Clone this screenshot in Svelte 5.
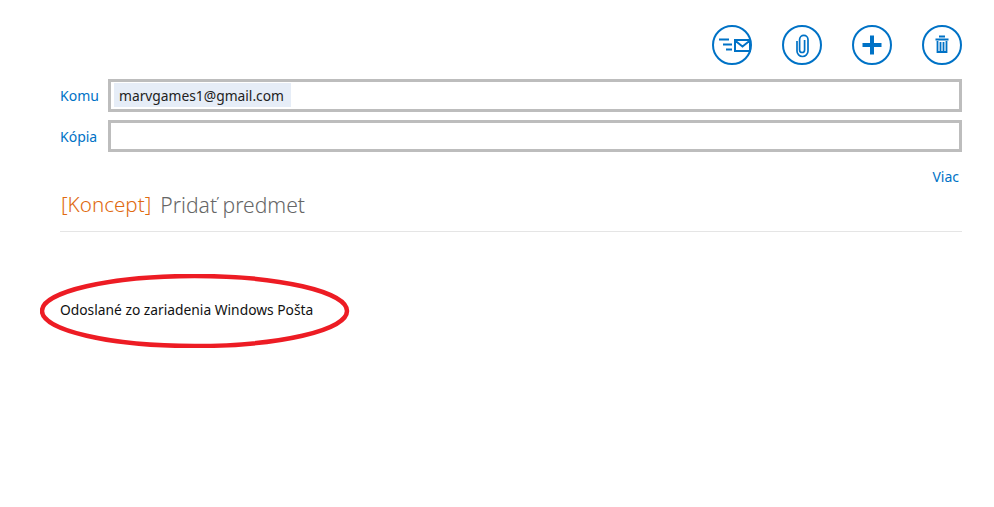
<script>
  let to = 'marvgames1@gmail.com'
</script>

<div class="compose">
  <div class="actions">
    <button class="round" aria-label="Odoslať">
      <svg viewBox="0 0 40 40" width="40" height="40">
        <circle cx="20" cy="20" r="19" class="ring" />
        <path d="M7 14.500h10M11 19.500h9M14 24.500h6" class="line" />
        <path d="M23 15h15v11H23zM23 15.500l7.500 6 7.500-6" class="line" />
      </svg>
    </button>
    <button class="round" aria-label="Priložiť">
      <svg viewBox="0 0 40 40" width="40" height="40">
        <circle cx="20" cy="20" r="19" class="ring" />
        <path d="M15 16v10a5.500 5.500 0 0 0 11 0V14.500a4.200 4.200 0 0 0-8.400 0V25a2.500 2.500 0 0 0 5 0V15" class="line clip" />
      </svg>
    </button>
    <button class="round" aria-label="Pridať">
      <svg viewBox="0 0 40 40" width="40" height="40">
        <circle cx="20" cy="20" r="19" class="ring" />
        <path d="M10.500 20h19M20 10.500v19" class="line bold" />
      </svg>
    </button>
    <button class="round" aria-label="Odstrániť">
      <svg viewBox="0 0 40 40" width="40" height="40">
        <circle cx="20" cy="20" r="19" class="ring" />
        <path d="M17 11.500h6M13.500 14.500h13" class="line" />
        <path d="M15.500 16v11h9V16M18.500 17v9M21.500 17v9" class="line trash" />
      </svg>
    </button>
  </div>

  <div class="field">
    <span class="label">Komu</span>
    <div class="box"><span class="chip">{to}</span></div>
  </div>
  <div class="field second">
    <span class="label">Kópia</span>
    <div class="box"></div>
  </div>

  <div class="more">Viac</div>

  <div class="subject">
    <span class="draft">[Koncept]</span>
    <span class="placeholder">Pridať predmet</span>
  </div>

  <div class="signature">
    <svg class="scribble" viewBox="0 0 310 74" width="310" height="74">
      <ellipse cx="154.500" cy="37" rx="152.500" ry="35" />
    </svg>
    Odoslané zo zariadenia Windows Pošta
  </div>
</div>

<style>
  :global(body) {
    background: #fff;
    font-family: "Noto Sans", "Open Sans", sans-serif;
  }

  .compose {
    display: flex;
    flex-direction: column;
    box-sizing: border-box;
    min-height: 507px;
    padding: 25px 32px 0 60px;
  }

  .actions {
    display: flex;
    justify-content: flex-end;
    gap: 30px;
    height: 40px;
    margin-bottom: 14px;
  }

  .round {
    width: 40px;
    height: 40px;
    padding: 0;
    border: 0;
    background: none;
  }

  .round svg {
    display: block;
  }

  .ring,
  .line {
    fill: none;
    stroke: #0072c6;
    stroke-width: 2;
  }

  .line.clip {
    stroke-width: 1.7;
  }

  .line.trash {
    stroke-width: 1.8;
  }

  .line.bold {
    stroke-width: 4;
  }

  .field {
    display: flex;
    align-items: center;
    height: 33px;
    margin-bottom: 8px;
  }

  .field.second {
    height: 32px;
  }

  .label {
    width: 48px;
    font-size: 14px;
    color: #0072c6;
  }

  .box {
    flex: 1;
    box-sizing: border-box;
    height: 100%;
    padding: 1px 3px;
    border: 3px solid #bdbdbd;
  }

  .chip {
    display: inline-block;
    box-sizing: border-box;
    width: 177px;
    height: 24px;
    padding-left: 5px;
    background: #e6edf7;
    font-size: 13.8px;
    line-height: 26px;
    color: #222;
  }

  .more {
    margin-top: 7px;
    padding-right: 3px;
    text-align: right;
    font-size: 14px;
    color: #0072c6;
  }

  .subject {
    display: flex;
    gap: 9px;
    margin-top: 5px;
    padding-bottom: 13px;
    border-bottom: 1px solid #e5e5e5;
    font-weight: 300;
    line-height: 27px;
  }

  .draft {
    margin-left: 1px;
    font-size: 20.600px;
    color: #e06a10;
  }

  .placeholder {
    font-size: 21.100px;
    color: #666;
  }

  .signature {
    position: relative;
    margin-top: 68px;
    font-size: 13.8px;
    line-height: 20px;
    color: #111;
  }

  .scribble {
    position: absolute;
    left: -20px;
    top: -26px;
  }

  .scribble ellipse {
    fill: none;
    stroke: #ed1c24;
    stroke-width: 4.500;
  }
</style>
